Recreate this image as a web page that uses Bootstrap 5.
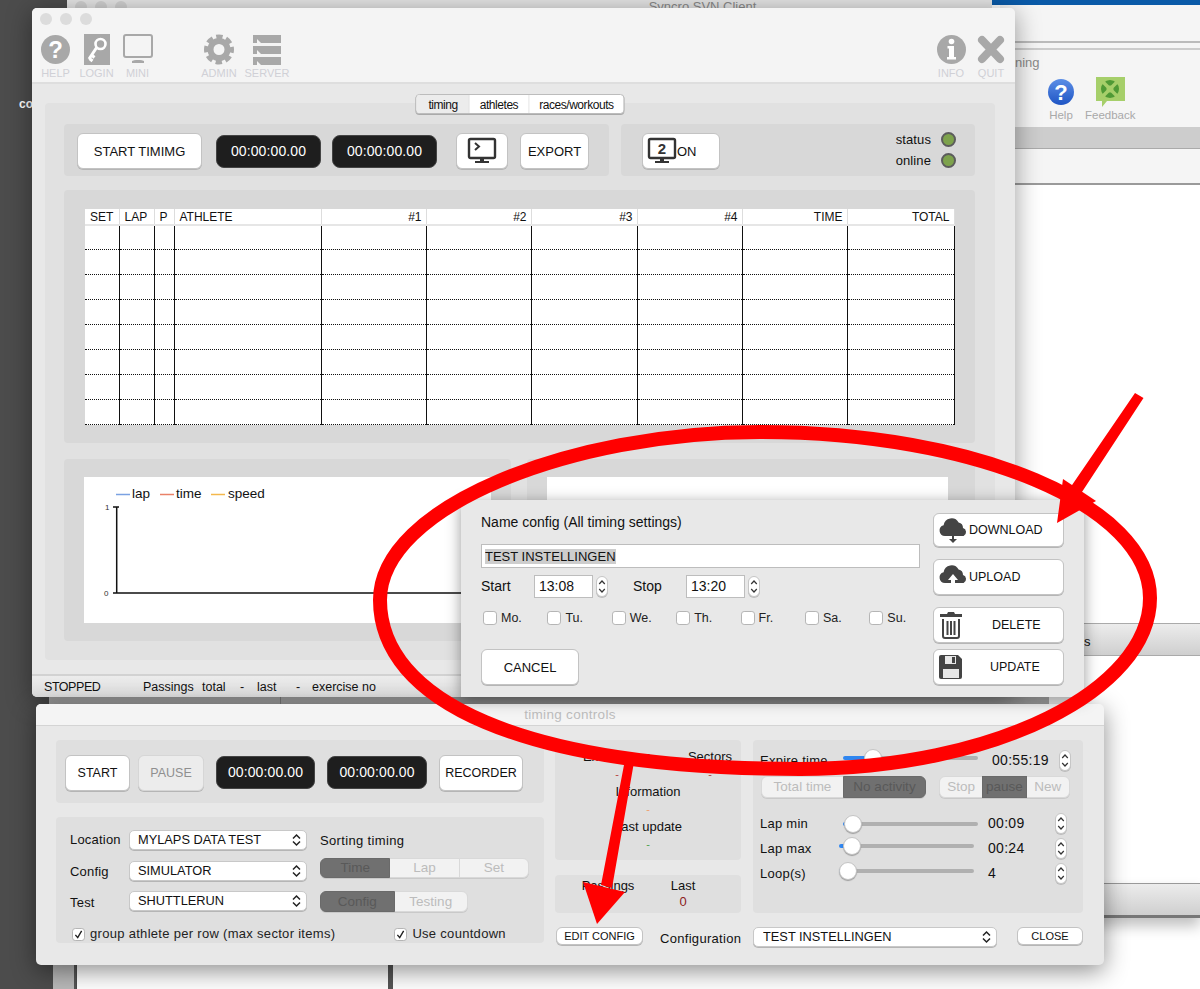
<!DOCTYPE html>
<html lang="en">
<head>
<meta charset="UTF-8">
<title>Timing</title>
<link href="https://cdn.jsdelivr.net/npm/bootstrap@5.3.0/dist/css/bootstrap.min.css" rel="stylesheet">
<style>
html, body { margin: 0; background: #fff; }
body { font-family: "Liberation Sans", Arial, sans-serif; font-size: 13px; color: #111; }
.desk { position: relative; width: 1200px; height: 989px; overflow: hidden; background: #fff; }

/* desktop behind the app */
.behind { position: absolute; }
.b-dark { left: 0; top: 0; width: 77px; height: 989px; background: #4c4c4c; }
.b-co { left: 19px; top: 95px; color: #fff; font-weight: 700; font-size: 12px; }
.b-strip { left: 53px; top: 965px; width: 23px; height: 24px; background: #b9b9b9; border-right: 2px solid #555; }
.b-divider { left: 388px; top: 965px; width: 5px; height: 24px; background: #555; }
.b-lane { left: 49px; top: 690px; width: 1000px; height: 20px; background: linear-gradient(#bbb, #a8a8a8); }
.b-lane2 { left: 280px; top: 690px; width: 1px; height: 20px; background: #888; }
.b-top { left: 67px; top: 0; width: 925px; height: 12px; background: #e6e6e6; border-bottom: 1px solid #bbb; text-align: center; font-size: 13px; line-height: 1; padding-left: 346px; color: #8a8a8a; }
.b-dots { left: 75px; top: 1px; width: 52px; height: 12px; display: flex; gap: 8px; }
.b-dots i { width: 12px; height: 12px; border-radius: 50%; background: #d2d2d2; display: block; }
.b-blue { left: 992px; top: 0; width: 208px; height: 5px; background: #0a5aa8; }
.b-side { left: 1000px; top: 5px; width: 200px; height: 180px; background: #f5f5f5; border-bottom: 2px solid #9a9a9a; }
.b-rule { left: 1000px; top: 41px; width: 200px; height: 9px; border-top: 2px solid #bbb; border-bottom: 2px solid #ccc; }
.b-band { left: 1000px; top: 127px; width: 200px; height: 22px; background: #cdcdcd; border-bottom: 1px solid #aaa; }
.b-ning { left: 1015px; top: 53px; color: #8a8a8a; font-size: 13px; }
.b-tool { top: 77px; display: flex; flex-direction: column; align-items: center; color: #a9a9a9; font-size: 11.5px; }
.b-grad { left: 1000px; top: 623px; width: 200px; height: 33px; background: linear-gradient(#ececec, #cfcfcf); border-top: 1px solid #aaa; border-bottom: 1px solid #aaa; font-size: 13px; }
.b-grad span { position: absolute; left: 84px; top: 8px; }
.b-grad2 { left: 1000px; top: 883px; width: 200px; height: 35px; background: linear-gradient(#ececec, #cfcfcf); border-top: 1px solid #999; border-bottom: 3px solid #777; box-shadow: 0 8px 14px rgba(0,0,0,.25); }

/* windows */
.app-win { position: absolute; background: #e8e8e8; border-radius: 5px; display: flex; flex-direction: column; }
.win-main { left: 32px; top: 8px; width: 983px; height: 689px; box-shadow: 0 4px 26px rgba(0,0,0,.4); }
.win-dlg { left: 461px; top: 500px; width: 623px; height: 197px; border-radius: 0; box-shadow: 0 3px 14px rgba(0,0,0,.4); }
.win-ctrl { left: 36px; top: 704px; width: 1068px; height: 261px; box-shadow: 0 6px 24px rgba(0,0,0,.45); }

.tool-head { height: 76px; background: #f4f4f4; border-bottom: 2px solid #dedede; border-radius: 5px 5px 0 0; flex: none; }
.lights { display: flex; gap: 8px; padding: 5px 0 0 8px; height: 25px; }
.lights i { width: 12px; height: 12px; border-radius: 50%; background: #dcdcdc; display: block; }
.tool-row { display: flex; padding-left: 3px; padding-right: 4px; }
.tool { display: flex; flex-direction: column; align-items: center; height: 46px; width: 41px; color: #d0d0d6; font-size: 11px; line-height: 12px; }
.tool svg { height: 33px; margin-bottom: 1px; }
.tool-wide { width: 48px; }
.tool-gap { margin-left: 37px; }
.tool-end { width: 40px; }

.shell { position: relative; margin: 19px 20px 0 13px; height: 557px; padding: 21px 20px 19px 19px; background: #e1e1e1; border-radius: 4px; }
.tabs-over { position: absolute; left: 50%; top: -9px; transform: translateX(-50%); display: flex; height: 20px; background: #fff; border: 1px solid #bcbcbc; border-radius: 4px; box-shadow: 0 1px 0 #aaa; overflow: hidden; }
.tabs-over span { padding: 0 10px; line-height: 20px; font-size: 12px; letter-spacing: -.45px; border-right: 1px solid #e4e4e4; }
.tabs-over span:first-child { background: #ececec; padding: 0 11px 0 12px; }
.tabs-over span:last-child { border: 0; }

.pane { background: #d8d8d8; border-radius: 4px; }
.pane-lite { background: #dfdfdf; border-radius: 4px; }
.mac-btn { background: #fff; border: 1px solid #c3c3c3; border-radius: 6px; box-shadow: 0 1px 0 #b5b5b5; color: #111; font-size: 13px; padding: 0; display: flex; align-items: center; justify-content: center; line-height: 1; }
.mac-btn:disabled { background: #ececec; color: #8f8f8f; opacity: 1; border-color: #d6d6d6; }
.clock { background: #1e1e1e; color: #fff; border: 1px solid #444; border-radius: 8px; font-size: 14px; letter-spacing: .1px; display: flex; align-items: center; justify-content: center; height: 33px; flex: none; }

.strip-a { width: 545px; height: 52px; padding: 9px 0 0 13px; }
.strip-b { width: 354px; height: 52px; padding: 9px 0 0 21px; }
.h36 { height: 36px; flex: none; }
.w125 { width: 125px; } .w52 { width: 52px; } .w69 { width: 69px; } .w78 { width: 78px; }
.strip-a .clock { width: 105px; margin: 2px 0 0 11px; }
.strip-a .clock.lead-in { margin-left: 14px; }
.strip-a .w52 { margin-left: 19px; }
.strip-a .w69 { margin-left: 12px; }
.lamp { margin-left: auto; padding: 0 19px 0 0; margin-top: -4px; }
.lamp div { display: flex; align-items: center; justify-content: flex-end; height: 21px; gap: 10px; letter-spacing: .1px; }
.lamp i { width: 15px; height: 15px; border-radius: 50%; background: #7da24c; border: 2px solid #5c5c5c; display: block; }

.grid-pane { margin-top: 14px; height: 253px; padding: 19px 21px; }
.race-grid { table-layout: fixed; width: 869px; border-collapse: collapse; background: #fff; font-size: 12px; }
.race-grid th { height: 16px; padding: 0 4px 0 5px; font-weight: 400; line-height: 14px; border-right: 1px solid #ddd; border-bottom: 2px solid #e6e6e6; white-space: nowrap; }
.race-grid td { height: 24.875px; padding: 0; border-right: 1px solid #111; border-left: 1px solid #111; border-bottom: 1px dotted #111; }
.race-grid td:first-child { border-left: 0; }

.chart-pane { width: 447px; height: 182px; padding: 18px 20px; }
.chart-pane-r { width: 448px; height: 182px; padding: 18px 27px 18px 20px; }
.chart-box { background: #fff; height: 146px; }
.chart-box svg { display: block; font-family: "Liberation Sans", Arial, sans-serif; }

.status-bar { margin-top: auto; height: 23px; flex: none; background: linear-gradient(#ececec, #dcdcdc); border-top: 2px solid #d2d2d2; border-radius: 0 0 5px 5px; display: flex; align-items: center; font-size: 12.5px; position: relative; }
.status-bar span { position: absolute; top: 2px; }
.status-bar .tight-word { letter-spacing: -.45px; }

/* config dialog */
.dlg-body { display: flex; height: 100%; padding: 13px 20px 12px; }
.dlg-left { width: 439px; display: flex; flex-direction: column; }
.dlg-right { width: 131px; margin-left: auto; display: flex; flex-direction: column; }
.dlg-right .mac-btn { height: 36px; justify-content: flex-start; padding-left: 3px; font-size: 12.5px; }
.dlg-right .first { height: 34px; }
.mt12 { margin-top: 12px; } .mt6 { margin-top: 6px; }
.dlg-title { height: 18px; line-height: 18px; font-size: 14px; }
.name-field { margin-top: 13px; height: 24px; border: 1px solid #bdbdbd; border-radius: 0; padding: 0 3px; font-size: 13px; color: #111; font-family: inherit; }
.name-field:focus { border-color: #bdbdbd; box-shadow: none; }
.name-field::selection { background: #cdcdcd; color: #111; }
.time-row { margin-top: 7px; display: flex; align-items: center; height: 22px; font-size: 14px; }
.time-lab { width: 53px; flex: none; }
.time-field { width: 59px; height: 23px; border: 1px solid #bdbdbd; background: #fff; padding: 0 4px; font-size: 14px; font-family: inherit; color: #111; border-radius: 0; flex: none; }
.spin { width: 12px; height: 21px; border: 1px solid #c6c6c6; border-radius: 6px; background: #fff; padding: 0; display: flex; align-items: center; justify-content: center; flex: none; box-shadow: 0 1px 0 #bbb; }
.spin svg { width: 8px; height: 15px; display: block; }
.time-row .spin { margin-left: 3px; }
.time-row .time-lab + .time-field + .spin + .time-lab { margin-left: 25px; }
.days { margin-top: 12px; display: flex; height: 18px; padding-left: 2px; }
.days .form-check { width: 64.4px; flex: none; margin: 0; padding: 0; min-height: 0; display: flex; align-items: center; gap: 4px; color: #222; font-size: 12.5px; }
.mac-check { margin: 0 !important; float: none !important; width: 14px; height: 14px; flex: none; border: 1px solid #b5b5b5; border-radius: 3px; }
.mac-check:checked { background-color: #fff; border-color: #b5b5b5; background-image: url("data:image/svg+xml,%3csvg xmlns='http://www.w3.org/2000/svg' viewBox='0 0 14 14'%3e%3cpath fill='none' stroke='%23222' stroke-width='1.8' d='M3 7.5 6 11 11 2.5'/%3e%3c/svg%3e"); }
.cancel-btn { width: 98px; height: 36px; margin-top: 22px; }
.btn-word { margin-left: 27px; }
.btn-word-u { margin-left: 25px; }

/* timing controls */
.ctrl-title { height: 22px; flex: none; background: #f4f4f4; border-bottom: 1px solid #d4d4d4; border-radius: 5px 5px 0 0; text-align: center; color: #bdbdbd; line-height: 22px; font-size: 13.5px; letter-spacing: .3px; }
.ctrl-body { display: flex; padding: 14px 0 0 20px; gap: 11px; }
.col-l { width: 488px; }
.run-pane { height: 63px; padding: 15px 0 0 9px; gap: 8px; }
.run-pane .mac-btn { font-size: 12.5px; }
.run-pane .clock { margin: 1px 0 0 4px; width: 99px; }
.run-pane .clock + .clock { width: 100px; }
.run-pane .w84 { width: 84px; margin-left: 4px; }
.w65 { width: 65px; } .w66 { width: 66px; }
.pick-pane { height: 126px; margin-top: 14px; padding: 13px 0 0 14px; position: relative; }
.pick-grid { display: grid; grid-template-columns: 59px 178px 222px; grid-auto-rows: 20px; row-gap: 10.5px; align-items: center; letter-spacing: .2px; }
.pick-grid .hd { padding-left: 13px; padding-top: 2px; letter-spacing: .35px; }
.pick-grid .low { padding-top: 3px; }
.mac-sel.form-select { height: 20px; min-height: 0; padding: 0 20px 0 8px; border: 1px solid #c8c8c8; border-radius: 5px; font-size: 12.8px; line-height: 18px; color: #111; box-shadow: 0 1px 0 #b5b5b5; background-position: right 5px center; background-size: 9px 14px; font-family: inherit; background-image: url("data:image/svg+xml,%3csvg xmlns='http://www.w3.org/2000/svg' viewBox='0 0 9 14'%3e%3cpath fill='none' stroke='%23222' stroke-width='1.5' d='M1 5.5 4.5 2 8 5.5M1 8.5 4.5 12 8 8.5'/%3e%3c/svg%3e"); }
.seg { display: flex; margin-left: 13px; height: 20px; }
.seg .btn { flex: 1 1 0; padding: 0; font-size: 13.5px; line-height: 18px; background: #f2f2f2; color: #bcbcbc; border: 1px solid #d9d9d9; box-shadow: 0 1px 0 #c9c9c9; }
.seg .btn.active { background: #707070; color: #595959; border-color: #6a6a6a; }
.seg-sort { width: 209px; margin-top: -6px; }
.seg-mode { width: 148px; height: 21px; margin-top: 1px; }
.pick-foot { position: absolute; left: 16px; right: 0; top: 109px; display: flex; height: 16px; color: #222; letter-spacing: .3px; }
.pick-foot label { display: flex; align-items: center; gap: 5px; }
.pick-foot label + label { margin-left: 59px; }
.pick-foot .mac-check { width: 13px; height: 13px; }

.col-r { width: 528px; }
.mid-pane { width: 186px; height: 120px; padding-top: 8px; text-align: center; line-height: 17.6px; }
.two { display: flex; }
.two .a { width: 124px; } .two .b { width: 62px; }
.dash { font-size: 11px; }
.tint-red { color: #b5433f; } .tint-orange { color: #f0a070; } .tint-green { color: #4f9f4f; }
.last-pane { width: 186px; height: 38px; margin-top: 15px; padding-top: 3px; text-align: center; line-height: 16px; }
.last-pane .a { width: 106px; } .last-pane .b { width: 44px; }
.last-pane .tint-red { color: #8c1c1c; }
.tune-pane { width: 330px; height: 173px; margin-left: 12px; padding: 10px 0 0 7px; letter-spacing: .25px; }
.tune-row { display: flex; align-items: center; height: 21px; }
.tune-label { width: 83px; flex: none; }
.tune-label.tight { width: 79px; }
.tune-val { width: 67px; flex: none; margin-left: 14px; font-size: 14px; letter-spacing: .3px; }
.tune-val.near { margin-left: 10px; }
.tune-range { -webkit-appearance: none; appearance: none; width: 135px; height: 20px; margin: 0; background: transparent; flex: none; }
.tune-range.lift3 { margin-bottom: 6px; }
.tune-range.lift2 { margin-bottom: 5px; }
.tune-range::-webkit-slider-runnable-track { height: 4px; background: linear-gradient(to right, #2f86f0 var(--fill), #b0b0b0 var(--fill)); border-radius: 2px; }
.tune-range::-webkit-slider-thumb { -webkit-appearance: none; width: 18px; height: 18px; margin-top: -7px; border-radius: 50%; background: #fff; border: 1px solid #c4c4c4; box-shadow: 0 1px 1px rgba(0,0,0,.3); }
.mode-row { display: flex; margin-top: 5px; height: 22px; }
.mode-row .seg { height: 22px; margin-left: 1px; }
.seg-expire { width: 165px; } .seg-act { width: 131px; margin-left: 13px !important; }
.seg-expire .btn.active { border-radius: 0 6px 6px 0; }
.tune-gap { margin-top: 15px; }
.tune-row + .tune-row { margin-top: 4px; }
.ctrl-foot { display: flex; margin-top: 14px; height: 20px; align-items: flex-start; }
.foot-edit { width: 87px; height: 18px; margin-left: 1px; font-size: 11px; flex: none; }
.foot-lab { margin-left: 17px; margin-top: 2px; width: 93px; flex: none; letter-spacing: .3px; }
.foot-sel.form-select { width: 244px; flex: none; padding-left: 9px; }
.foot-close { width: 66px; height: 18px; margin-left: 20px; font-size: 11px; flex: none; }

.marks { position: absolute; left: 0; top: 0; pointer-events: none; }
</style>
</head>
<body>
<svg width="0" height="0" class="position-absolute">
  <symbol id="chev" viewBox="0 0 8 15"><path fill="none" stroke="#333" stroke-width="1.2" d="M1.2 5 4 2l2.8 3M1.2 10 4 13l2.8-3"/></symbol>
  <symbol id="cloud" viewBox="0 0 30 30"><path fill="#444" d="M7 21a5.5 5.5 0 0 1-1.400-10.800A8 8 0 0 1 20.600 7.600 5.500 5.500 0 0 1 25 13a4.300 4.300 0 0 1 .6 8z"/></symbol>
</svg>

<div class="desk">
  <!-- stuff behind the windows -->
  <div class="behind b-dark"></div>
  <div class="behind b-co">co</div>
  <div class="behind b-strip"></div>
  <div class="behind b-divider"></div>
  <div class="behind b-top">Syncro SVN Client</div>
  <div class="behind b-dots"><i></i><i></i><i></i></div>
  <div class="behind b-blue"></div>
  <div class="behind b-side"></div>
  <div class="behind b-rule"></div>
  <div class="behind b-band"></div>
  <div class="behind b-ning">ning</div>
  <div class="behind b-tool" style="left:1047px">
    <svg width="28" height="30" viewBox="0 0 28 30"><defs><linearGradient id="bh" x1="0" y1="0" x2="0" y2="1"><stop offset="0" stop-color="#5c8ee6"/><stop offset="1" stop-color="#1f55c4"/></linearGradient></defs><circle cx="14" cy="15" r="13" fill="url(#bh)"/><text x="14" y="23" text-anchor="middle" fill="#fff" font-size="22" font-weight="700">?</text></svg>
    <span>Help</span>
  </div>
  <div class="behind b-tool" style="left:1085px">
    <svg width="50" height="30" viewBox="0 0 50 30"><path fill="#a6cf6a" d="M11 0h29v24H22l-5 6v-6h-6z"/><circle cx="25" cy="12" r="9" fill="#4f9a35"/><path stroke="#a6cf6a" stroke-width="3.5" d="M18 5l14 14M32 5 18 19"/><circle cx="25" cy="12" r="3.5" fill="#a6cf6a"/></svg>
    <span>Feedback</span>
  </div>
  <div class="behind b-grad"><span>s</span></div>
  <div class="behind b-grad2"></div>
  <div class="behind b-lane"></div>
  <div class="behind b-lane2"></div>

  <!-- main window -->
  <div class="app-win win-main">
    <div class="tool-head">
      <div class="lights"><i></i><i></i><i></i></div>
      <div class="tool-row">
        <div class="tool">
          <svg width="29" height="33" viewBox="0 0 29 33"><circle cx="14.5" cy="16.5" r="14.5" fill="#a8a8a8"/><text x="14.5" y="25" text-anchor="middle" fill="#fff" font-size="24" font-weight="700">?</text></svg>
          <span>HELP</span>
        </div>
        <div class="tool">
          <svg width="26" height="33" viewBox="0 0 26 33"><rect y="1" width="26" height="31" fill="#a8a8a8"/><circle cx="16.5" cy="11" r="5" fill="none" stroke="#fff" stroke-width="2.6"/><path stroke="#fff" stroke-width="3" d="M13 14 5 26M7.5 22l3 2.5M5.5 25.5l3 2.5"/></svg>
          <span>LOGIN</span>
        </div>
        <div class="tool">
          <svg width="30" height="33" viewBox="0 0 30 33"><rect x="1" y="2" width="28" height="22" rx="2" fill="none" stroke="#a8a8a8" stroke-width="2"/><path fill="#a8a8a8" d="M9 28c1-1.500 11-1.500 12 0v2H9z"/></svg>
          <span>MINI</span>
        </div>
        <div class="tool tool-wide tool-gap">
          <svg width="30" height="33" viewBox="0 0 30 33"><circle cx="15" cy="16.500" r="8.500" fill="none" stroke="#a8a8a8" stroke-width="6"/><circle cx="15" cy="16.500" r="12.500" fill="none" stroke="#a8a8a8" stroke-width="5" stroke-dasharray="6.200 3.600" stroke-dashoffset="3"/></svg>
          <span>ADMIN</span>
        </div>
        <div class="tool tool-wide">
          <svg width="28" height="33" viewBox="0 0 28 33"><path fill="#a8a8a8" d="M0 2h28v8H8L4 6v4H0zM0 13h28v8H8l-4-4v4H0zM0 24h28v8H8l-4-4v4H0z"/></svg>
          <span>SERVER</span>
        </div>
        <div class="tool tool-end ms-auto">
          <svg width="29" height="33" viewBox="0 0 29 33"><circle cx="14.500" cy="16.500" r="14.500" fill="#a8a8a8"/><circle cx="14.500" cy="8.500" r="2.800" fill="#fff"/><path fill="#fff" d="M10.500 13h6.500v11h2v2.500h-9V24h2v-8.500h-1.500z"/></svg>
          <span>INFO</span>
        </div>
        <div class="tool tool-end">
          <svg width="28" height="33" viewBox="0 0 28 33"><path stroke="#a8a8a8" stroke-width="8" stroke-linecap="round" d="M5 7l18 19M23 7 5 26"/></svg>
          <span>QUIT</span>
        </div>
      </div>
    </div>

    <div class="shell">
      <div class="tabs-over"><span>timing</span><span>athletes</span><span>races/workouts</span></div>

      <div class="d-flex gap-2 justify-content-between">
        <div class="pane strip-a d-flex">
          <button class="mac-btn h36 w125">START TIMIMG</button>
          <div class="clock lead-in">00:00:00.00</div>
          <div class="clock">00:00:00.00</div>
          <button class="mac-btn h36 w52">
            <svg width="30" height="30" viewBox="0 0 30 30"><rect x="2" y="3" width="26" height="19" rx="1.500" fill="none" stroke="#333" stroke-width="2.400"/><path fill="none" stroke="#333" stroke-width="2" d="M8 7l4 3.500L8 14"/><path fill="#333" d="M13 22h4v3h5v2H8v-2h5z"/></svg>
          </button>
          <button class="mac-btn h36 w69">EXPORT</button>
        </div>
        <div class="pane strip-b d-flex">
          <button class="mac-btn h36 w78 justify-content-start ps-1">
            <svg width="30" height="30" viewBox="0 0 30 30"><rect x="2" y="3" width="26" height="19" rx="1.500" fill="none" stroke="#333" stroke-width="2.400"/><text x="15" y="18" text-anchor="middle" font-size="15" font-weight="700" fill="#333" font-family="Liberation Sans">2</text><path fill="#333" d="M13 22h4v3h5v2H8v-2h5z"/></svg>
            ON
          </button>
          <div class="lamp">
            <div>status <i></i></div>
            <div>online <i></i></div>
          </div>
        </div>
      </div>

      <div class="pane grid-pane">
        <table class="race-grid">
          <colgroup><col width="34"><col width="35"><col width="20"><col width="147"><col width="105"><col width="105"><col width="106"><col width="105"><col width="105"><col width="107"></colgroup>
          <thead>
            <tr><th>SET</th><th>LAP</th><th>P</th><th>ATHLETE</th><th class="text-end">#1</th><th class="text-end">#2</th><th class="text-end">#3</th><th class="text-end">#4</th><th class="text-end">TIME</th><th class="text-end">TOTAL</th></tr>
          </thead>
          <tbody id="raceRows"></tbody>
        </table>
      </div>

      <div class="d-flex justify-content-between mt-3">
        <div class="pane chart-pane">
          <div class="chart-box">
            <svg width="407" height="146" viewBox="0 0 407 146">
              <path stroke="#7ba2e2" stroke-width="1.500" d="M32 17.500h14"/><text x="48" y="21" font-size="13.500" fill="#111">lap</text>
              <path stroke="#e98268" stroke-width="1.500" d="M76 17.500h14"/><text x="92" y="21" font-size="13.500" fill="#111">time</text>
              <path stroke="#f4b84c" stroke-width="1.500" d="M127 17.500h14"/><text x="144" y="21" font-size="13.500" fill="#111">speed</text>
              <text x="21" y="33" font-size="8" fill="#333">1</text>
              <text x="20" y="119" font-size="8" fill="#333">0</text>
              <path stroke="#111" stroke-width="1.500" fill="none" d="M29 30h6M32.700 30v86M29 116h378"/>
            </svg>
          </div>
        </div>
        <div class="pane chart-pane-r">
          <div class="chart-box"></div>
        </div>
      </div>
    </div>

    <div class="status-bar">
      <span class="tight-word" style="left:12px">STOPPED</span>
      <span style="left:111px">Passings</span>
      <span style="left:170px">total</span>
      <span style="left:208px">-</span>
      <span style="left:225px">last</span>
      <span style="left:264px">-</span>
      <span style="left:280px">exercise no</span>
    </div>
  </div>

  <!-- timing controls window -->
  <div class="app-win win-ctrl">
    <div class="ctrl-title">timing controls</div>
    <div class="ctrl-body">
      <div class="col-l">
        <div class="pane-lite run-pane d-flex">
          <button class="mac-btn h36 w65">START</button>
          <button class="mac-btn h36 w66" disabled>PAUSE</button>
          <div class="clock">00:00:00.00</div>
          <div class="clock">00:00:00.00</div>
          <button class="mac-btn h36 w84">RECORDER</button>
        </div>
        <div class="pane-lite pick-pane">
          <div class="pick-grid">
            <span>Location</span>
            <select class="form-select mac-sel"><option>MYLAPS DATA TEST</option></select>
            <span class="hd">Sorting timing</span>
            <span class="low">Config</span>
            <select class="form-select mac-sel"><option>SIMULATOR</option></select>
            <div class="btn-group seg seg-sort"><button class="btn active">Time</button><button class="btn">Lap</button><button class="btn">Set</button></div>
            <span class="low">Test</span>
            <select class="form-select mac-sel"><option>SHUTTLERUN</option></select>
            <div class="btn-group seg seg-mode"><button class="btn active">Config</button><button class="btn">Testing</button></div>
          </div>
          <div class="pick-foot">
            <label><input class="form-check-input mac-check" type="checkbox" checked> group athlete per row (max sector items)</label>
            <label><input class="form-check-input mac-check" type="checkbox" checked> Use countdown</label>
          </div>
        </div>
      </div>

      <div class="col-r">
        <div class="d-flex">
          <div>
            <div class="pane-lite mid-pane">
              <div class="two"><div class="a">Exercise no</div><div class="b">Sectors</div></div>
              <div class="two dash tint-red"><div class="a">-</div><div class="b">-</div></div>
              <div>Information</div>
              <div class="dash tint-orange">-</div>
              <div>Last update</div>
              <div class="dash tint-green">-</div>
            </div>
            <div class="pane-lite last-pane">
              <div class="two"><div class="a">Passings</div><div class="b">Last</div></div>
              <div class="two tint-red"><div class="a">-</div><div class="b">0</div></div>
            </div>
          </div>
          <div class="pane-lite tune-pane">
            <div class="tune-row">
              <span class="tune-label">Expire time</span>
              <input class="tune-range lift3" type="range" value="18" style="--fill:22%">
              <span class="tune-val">00:55:19</span>
              <button class="spin"><svg><use href="#chev"/></svg></button>
            </div>
            <div class="mode-row">
              <div class="btn-group seg seg-expire"><button class="btn">Total time</button><button class="btn active">No activity</button></div>
              <div class="btn-group seg seg-act"><button class="btn">Stop</button><button class="btn active">pause</button><button class="btn">New</button></div>
            </div>
            <div class="tune-row tune-gap">
              <span class="tune-label">Lap min</span>
              <input class="tune-range" type="range" value="1" style="--fill:5%">
              <span class="tune-val near">00:09</span>
              <button class="spin"><svg><use href="#chev"/></svg></button>
            </div>
            <div class="tune-row">
              <span class="tune-label tight">Lap max</span>
              <input class="tune-range lift2" type="range" value="3" style="--fill:7%">
              <span class="tune-val">00:24</span>
              <button class="spin"><svg><use href="#chev"/></svg></button>
            </div>
            <div class="tune-row">
              <span class="tune-label tight">Loop(s)</span>
              <input class="tune-range lift2" type="range" value="0" style="--fill:2%">
              <span class="tune-val">4</span>
              <button class="spin"><svg><use href="#chev"/></svg></button>
            </div>
          </div>
        </div>
        <div class="ctrl-foot">
          <button class="mac-btn foot-edit">EDIT CONFIG</button>
          <span class="foot-lab">Configuration</span>
          <select class="form-select mac-sel foot-sel"><option>TEST INSTELLINGEN</option></select>
          <button class="mac-btn foot-close">CLOSE</button>
        </div>
      </div>
    </div>
  </div>

  <!-- config dialog -->
  <div class="app-win win-dlg">
    <div class="dlg-body">
      <div class="dlg-left">
        <div class="dlg-title">Name config (All timing settings)</div>
        <input id="configName" class="form-control name-field" type="text" value="TEST INSTELLINGEN">
        <div class="time-row">
          <span class="time-lab">Start</span>
          <input class="time-field" type="text" value="13:08">
          <button class="spin"><svg><use href="#chev"/></svg></button>
          <span class="time-lab">Stop</span>
          <input class="time-field" type="text" value="13:20">
          <button class="spin"><svg><use href="#chev"/></svg></button>
        </div>
        <div class="days" id="dayRow"></div>
        <button class="mac-btn cancel-btn">CANCEL</button>
      </div>
      <div class="dlg-right">
        <button class="mac-btn first">
          <svg width="32" height="30" viewBox="0 0 30 30"><use href="#cloud"/><path fill="#444" d="M14 19h2v5h3l-4 4-4-4h3z"/></svg>
          DOWNLOAD
        </button>
        <button class="mac-btn mt12">
          <svg width="32" height="30" viewBox="0 0 30 30"><use href="#cloud"/><path fill="#fff" d="M15 12l5 6h-3v5h-4v-5h-3z"/></svg>
          UPLOAD
        </button>
        <button class="mac-btn mt12">
          <svg width="28" height="30" viewBox="0 0 28 30"><path fill="#444" d="M3 4h7l1-2h6l1 2h7v3H3z"/><path fill="none" stroke="#444" stroke-width="2" d="M6 9v17a2 2 0 0 0 2 2h12a2 2 0 0 0 2-2V9M10.500 11v14M14 11v14M17.500 11v14"/></svg>
          <span class="btn-word">DELETE</span>
        </button>
        <button class="mac-btn mt6">
          <svg width="28" height="30" viewBox="0 0 28 30"><path fill="#444" d="M4 3h17l4 4v18a2 2 0 0 1-2 2H4a2 2 0 0 1-2-2V5a2 2 0 0 1 2-2z"/><path fill="#e8e8e8" d="M8 4h11v8H8zM6 17h16v9H6z"/><path fill="#444" d="M15 5h3v6h-3z"/></svg>
          <span class="btn-word-u">UPDATE</span>
        </button>
      </div>
    </div>
  </div>

  <!-- red annotations drawn over the shot -->
  <svg class="marks" width="1200" height="989" viewBox="0 0 1200 989">
    <path d="M380 600C380 507 570 432 760 432C975 432 1150 505 1150 598C1150 690 995 769 800 769C520 769 380 700 380 600Z" fill="none" stroke="#f00" stroke-width="14"/>
    <path fill="#f00" d="M1135 393l8.500 5-63.500 97-10-7zM1057 523l6-44 33 22zM624 765h9.500L612 888l-11-3zM597 924l-14-42 42 10z"/>
  </svg>
</div>

<script src="https://cdn.jsdelivr.net/npm/bootstrap@5.3.0/dist/js/bootstrap.bundle.min.js"></script>
<script>
  // rows of the timing grid
  var rowHtml = '';
  for (var r = 0; r < 8; r++) {
    rowHtml += '<tr>' + '<td></td>'.repeat(10) + '</tr>';
  }
  document.getElementById('raceRows').innerHTML = rowHtml;

  // weekday checkboxes
  var dayHtml = '';
  ['Mo.', 'Tu.', 'We.', 'Th.', 'Fr.', 'Sa.', 'Su.'].forEach(function (d) {
    dayHtml += '<label class="form-check"><input class="form-check-input mac-check" type="checkbox"> ' + d + '</label>';
  });
  document.getElementById('dayRow').innerHTML = dayHtml;

  // the config name shows up selected in the dialog
  document.getElementById('configName').select();
</script>
</body>
</html>
